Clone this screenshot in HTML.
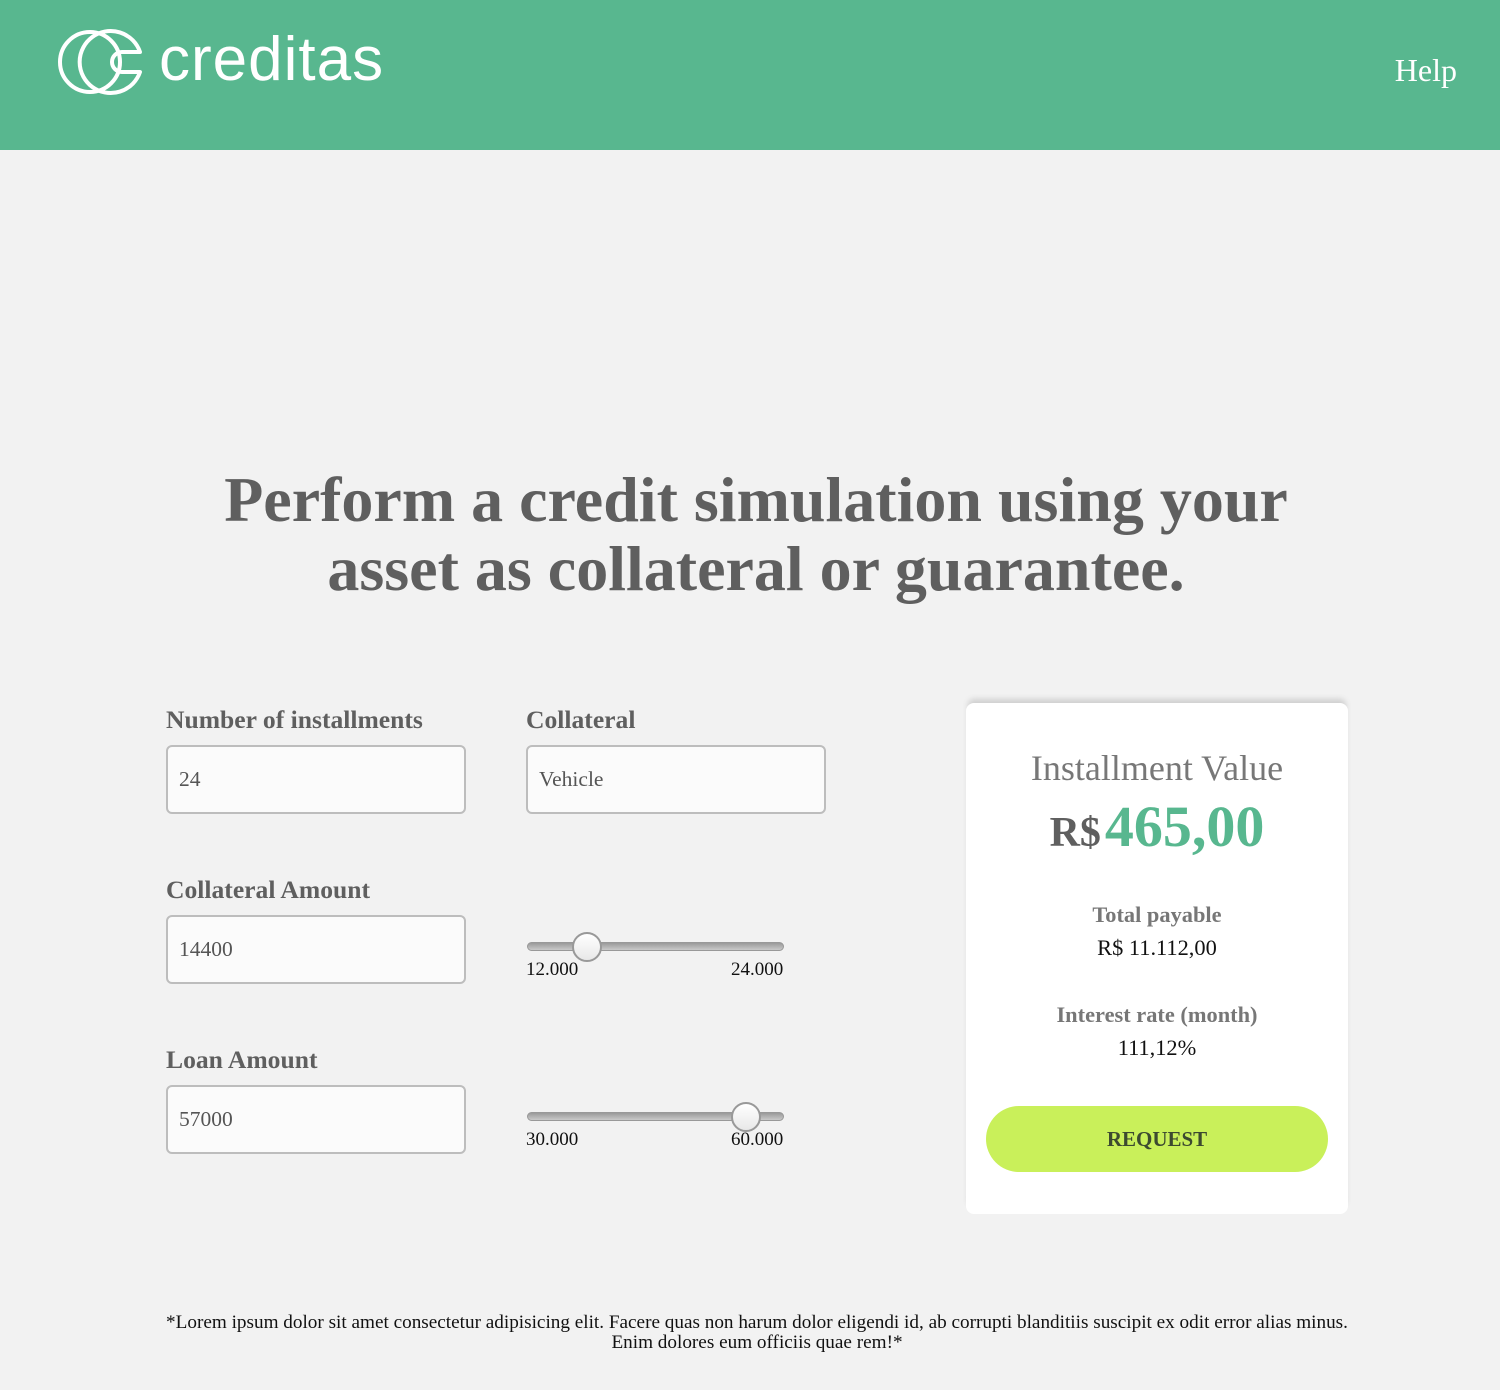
<!DOCTYPE html>
<html><head><meta charset="utf-8"><style>
*{margin:0;padding:0;box-sizing:border-box}
body{width:1500px;height:1390px;background:#f2f2f2;font-family:"Liberation Serif",serif;position:relative;overflow:hidden;color:#5f5f5f}
.hdr{position:absolute;left:0;top:0;width:1500px;height:150px;background:#58b78f}
.help{position:absolute;right:43px;top:52px;color:#fff;font-size:32px}
h1{position:absolute;left:0;width:1512px;top:465px;text-align:center;font-size:64px;line-height:69px;font-weight:bold;color:#5f5f5f}
.lbl{position:absolute;font-size:25.6px;font-weight:bold;color:#5f5f5f}
.inp{position:absolute;width:300px;height:69px;border:2px solid #bdbdbd;border-radius:6px;background:#fbfbfb;font-size:21.5px;padding:20px 11px;color:#555}
.track{position:absolute;width:257px;height:9px;border-radius:5px;background:linear-gradient(#9a9a9a,#c9c9c9);border:1px solid #999}
.thumb{position:absolute;width:30px;height:30px;border-radius:50%;background:linear-gradient(#fff,#e8e8e8);border:2px solid #999}
.sl{position:absolute;font-size:19px;color:#111}
.card{position:absolute;left:966px;top:703px;width:382px;height:511px;background:#fff;border-radius:8px;box-shadow:0 -6px 6px -2px #cfcfcf}
.c{position:absolute;left:0;width:382px;text-align:center}
.btn{position:absolute;left:20px;top:403px;width:342px;height:66px;border-radius:33px;background:#c9f05a;text-align:center;line-height:66px;font-weight:bold;font-size:21px;color:#3c4a30}
.foot{position:absolute;left:0;width:1514px;top:1313px;text-align:center;font-size:19.2px;line-height:20px;color:#111}
</style></head><body>
<div class="hdr">
<svg style="position:absolute;left:56px;top:28px" width="92" height="68" viewBox="0 0 92 68">
<circle cx="34" cy="34" r="30" fill="none" stroke="#fff" stroke-width="4"/>
<path d="M84 24 A31 31 0 1 0 84 44 L66 44 A10 10 0 0 1 66 24 Z" fill="none" stroke="#fff" stroke-width="4" stroke-linejoin="round"/>
</svg>
<div style="position:absolute;left:159px;top:24px;color:#fff;font-family:'Liberation Sans',sans-serif;font-size:62px;letter-spacing:1px;font-weight:300">creditas</div>
<div class="help">Help</div>
</div>
<h1>Perform a credit simulation using your<br>asset as collateral or guarantee.</h1>
<div class="lbl" style="left:166px;top:705px">Number of installments</div>
<div class="lbl" style="left:526px;top:705px">Collateral</div>
<div class="inp" style="left:166px;top:745px">24</div>
<div class="inp" style="left:526px;top:745px">Vehicle</div>
<div class="lbl" style="left:166px;top:875px">Collateral Amount</div>
<div class="inp" style="left:166px;top:915px">14400</div>
<div class="track" style="left:527px;top:942px"></div>
<div class="thumb" style="left:572px;top:932px"></div>
<div class="sl" style="left:526px;top:959px">12.000</div>
<div class="sl" style="left:731px;top:959px">24.000</div>
<div class="lbl" style="left:166px;top:1045px">Loan Amount</div>
<div class="inp" style="left:166px;top:1085px">57000</div>
<div class="track" style="left:527px;top:1112px"></div>
<div class="thumb" style="left:731px;top:1102px"></div>
<div class="sl" style="left:526px;top:1129px">30.000</div>
<div class="sl" style="left:731px;top:1129px">60.000</div>
<div class="card">
<div class="c" style="top:44px;font-size:36px;color:#777">Installment Value</div>
<div class="c" style="top:90px;font-weight:bold"><span style="font-size:42px;color:#5f5f5f">R$</span> <span style="font-size:58px;color:#58b78f">465,00</span></div>
<div class="c" style="top:199px;font-size:22.4px;font-weight:bold;color:#777">Total payable</div>
<div class="c" style="top:232px;font-size:22.4px;color:#111">R$ 11.112,00</div>
<div class="c" style="top:299px;font-size:22.4px;font-weight:bold;color:#777">Interest rate (month)</div>
<div class="c" style="top:332px;font-size:22.4px;color:#111">111,12%</div>
<div class="btn">REQUEST</div>
</div>
<div class="foot">*Lorem ipsum dolor sit amet consectetur adipisicing elit. Facere quas non harum dolor eligendi id, ab corrupti blanditiis suscipit ex odit error alias minus.<br>Enim dolores eum officiis quae rem!*</div>
</body></html>
